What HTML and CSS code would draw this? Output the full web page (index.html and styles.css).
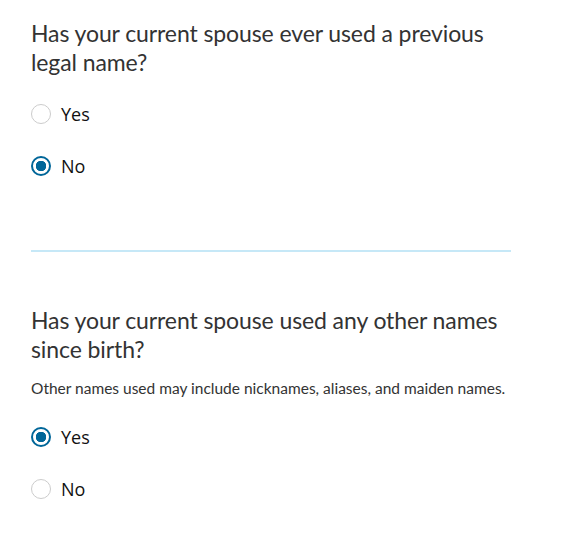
FILE: index.html
```html
<!DOCTYPE html>
<html>
<head>
<meta charset="utf-8">
<link rel="stylesheet" href="styles.css">
</head>
<body>
<div class="page">
  <section class="question">
    <h2 class="q-title">Has your current spouse ever used a previous legal name?</h2>
    <div class="options">
      <label class="option"><span class="radio"></span><span class="opt-text">Yes</span></label>
      <label class="option"><span class="radio checked"></span><span class="opt-text">No</span></label>
    </div>
  </section>
  <hr class="divider">
  <section class="question second">
    <h2 class="q-title">Has your current spouse used any other names since birth?</h2>
    <p class="hint">Other names used may include nicknames, aliases, and maiden names.</p>
    <div class="options">
      <label class="option"><span class="radio checked"></span><span class="opt-text">Yes</span></label>
      <label class="option"><span class="radio"></span><span class="opt-text">No</span></label>
    </div>
  </section>
</div>
</body>
</html>
```

FILE: styles.css
```css
html, body {
  margin: 0;
  padding: 0;
  background: #ffffff;
}
.page {
  padding: 19px 0 0 31px;
  width: 480px;
  font-family: Lato, "Open Sans", sans-serif;
}
.q-title {
  margin: 0;
  font-weight: 400;
  font-size: 23px;
  line-height: 29px;
  letter-spacing: -0.1px;
  color: #333333;
}
.options {
  display: flex;
  flex-direction: column;
  gap: 28px;
  margin-top: 25px;
}
.option {
  display: flex;
  align-items: center;
  gap: 10px;
  height: 24px;
}
.radio {
  box-sizing: border-box;
  width: 20px;
  height: 20px;
  border-radius: 50%;
  border: 1px solid #cccccc;
  background: #fff;
  flex: none;
}
.radio.checked {
  border: 2px solid #006699;
  background: radial-gradient(circle, #006699 0 5px, #fff 5.5px);
}
.opt-text {
  font-family: "Open Sans", sans-serif;
  font-size: 18px;
  color: #111111;
}
.divider {
  border: 0;
  height: 2px;
  background: #c6e8f7;
  margin: 72px 0 0 0;
  width: 480px;
}
.second {
  margin-top: 54px;
}
.hint {
  margin: 14px 0 0 0;
  font-size: 15.5px;
  color: #333333;
  line-height: 20px;
}
.second .options {
  margin-top: 27px;
}
```
